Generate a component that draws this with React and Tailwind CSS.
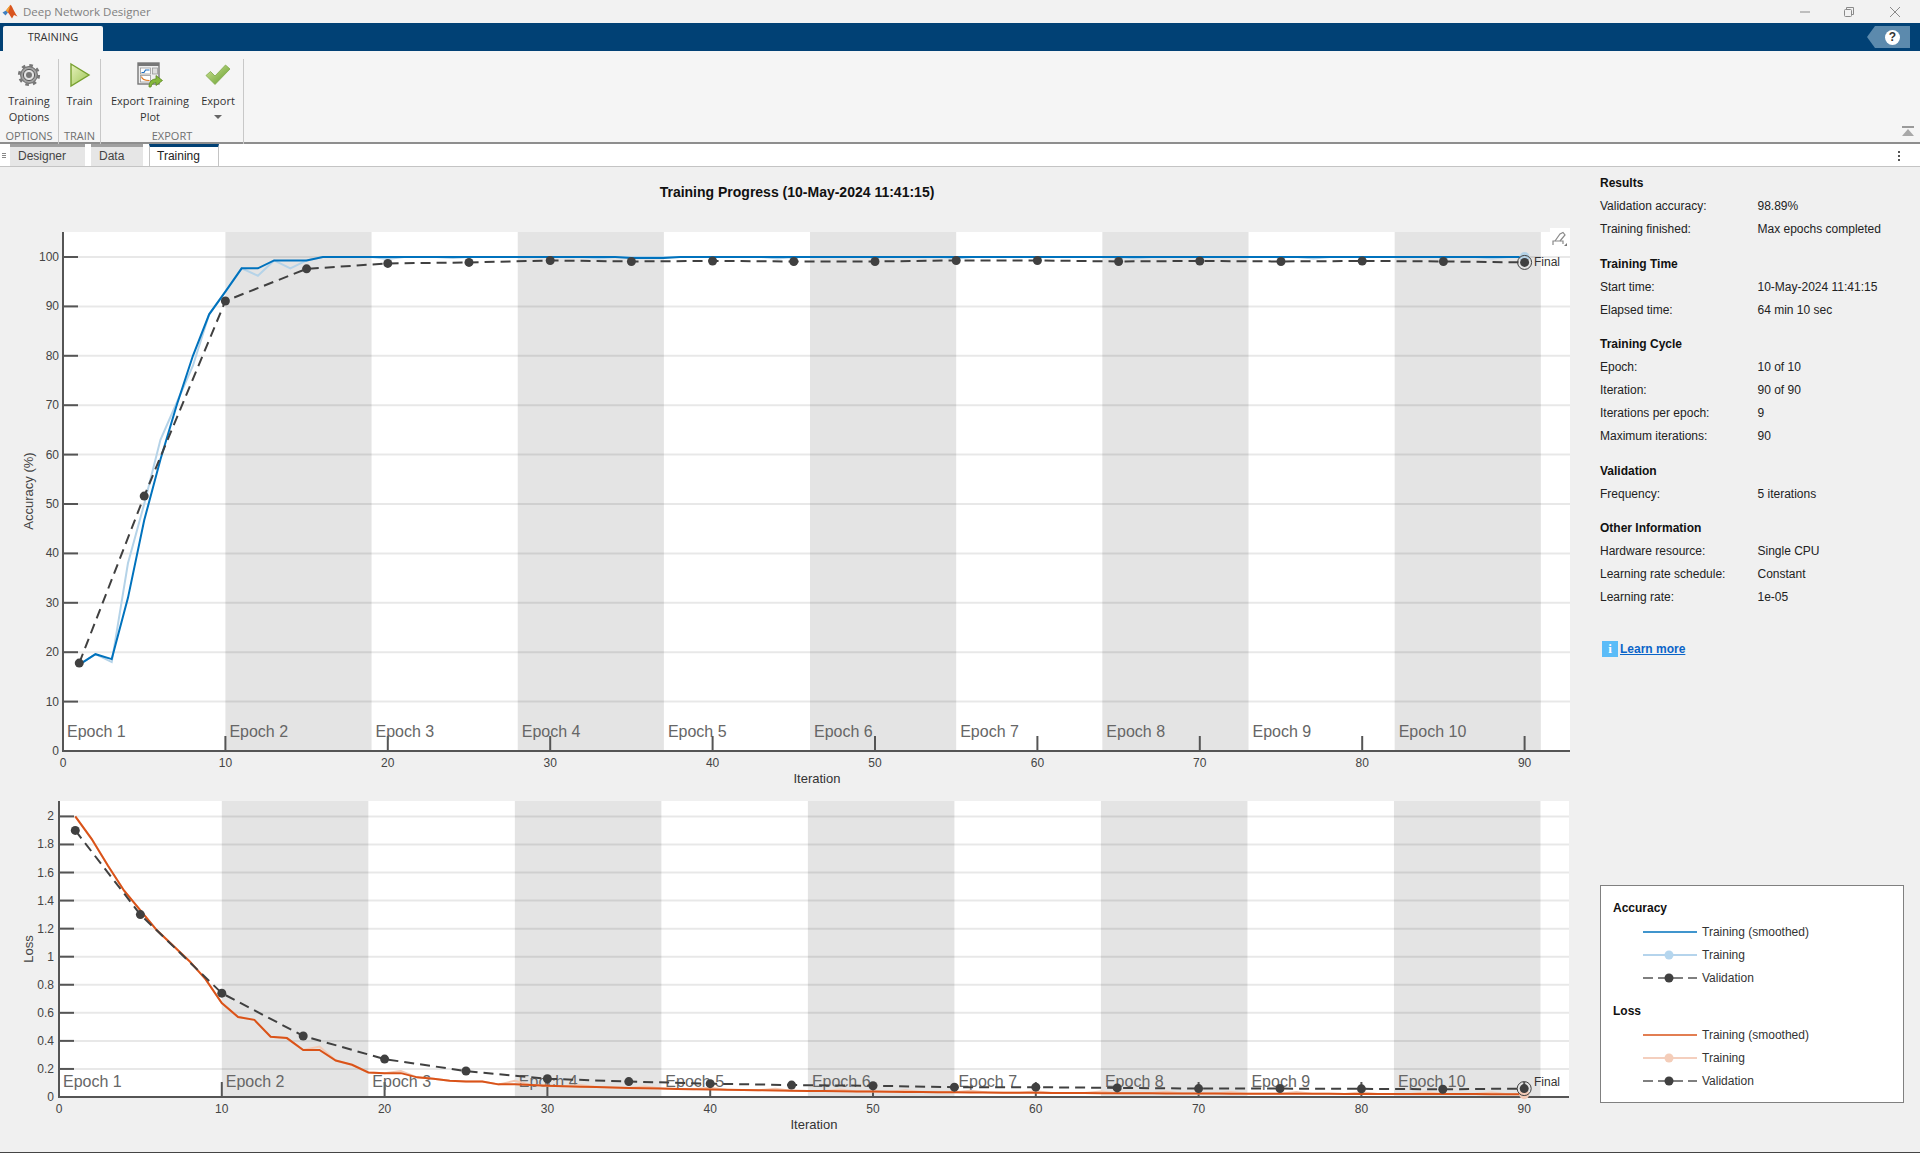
import React from "react";

const accSmooth = [17.5, 19.6, 18.6, 31, 46.7, 59, 70, 80, 88.4, 93, 97.7, 97.7, 99.3, 99.3, 99.3, 100];
const accRaw = [17.5, 19.6, 18, 38, 50, 63, 70.5, 78, 88.4, 93, 97.7, 96.2, 99.3, 97.7, 99.3, 100, 100, 100, 100, 99.6, 100, 100, 100, 99.8, 100];
const accVal = [[1, 17.8], [5, 51.6], [10, 91.1], [15, 97.6], [20, 98.7], [25, 98.9], [30, 99.3], [35, 99.1], [40, 99.2], [45, 99.1], [50, 99.1], [55, 99.3], [60, 99.3], [65, 99.1], [70, 99.2], [75, 99.1], [80, 99.2], [85, 99.1], [90, 98.9]];

const lossSmooth = [2, 1.84, 1.65, 1.47, 1.33, 1.19, 1.08, 0.97, 0.84, 0.67, 0.57, 0.55, 0.43, 0.42, 0.335, 0.335, 0.26, 0.23, 0.175, 0.17, 0.17, 0.14, 0.13, 0.115, 0.11, 0.11, 0.09, 0.09, 0.085, 0.08];
const lossRaw = [2, 1.84, 1.65, 1.47, 1.33, 1.19, 1.08, 0.97, 0.84, 0.67, 0.57, 0.55, 0.43, 0.42, 0.335, 0.36, 0.26, 0.23, 0.175, 0.17, 0.185, 0.14, 0.13, 0.115, 0.11, 0.11, 0.09, 0.115, 0.085, 0.08];
const lossVal = [[1, 1.9], [5, 1.3], [10, 0.74], [15, 0.435], [20, 0.27], [25, 0.185], [30, 0.13], [35, 0.11], [40, 0.095], [45, 0.085], [50, 0.08], [55, 0.07], [60, 0.07], [65, 0.065], [70, 0.06], [75, 0.06], [80, 0.058], [85, 0.055], [90, 0.06]];

// fill out the flat tail of each curve up to iteration 90
function extend(list, fn) {
  const out = [...list];
  for (let i = list.length + 1; i <= 90; i++) out.push(fn(i));
  return out;
}

const accSmoothAll = extend(accSmooth, (i) => (i > 34 && i < 38 ? 99.8 : 100));
const accRawAll = extend(accRaw, (i) => (i % 11 === 0 ? 99.7 : 100));
const lossSmoothAll = extend(lossSmooth, (i) => 0.018 + 0.062 * Math.exp(-(i - 30) / 18));
const lossRawAll = extend(lossRaw, (i) => 0.018 + 0.062 * Math.exp(-(i - 30) / 18) + (i % 4 === 0 ? 0.012 : 0));

const bands = [10, 28, 46, 64, 82];
const epochStarts = [0, 10, 19, 28, 37, 46, 55, 64, 73, 82];
const xTicks = [0, 10, 20, 30, 40, 50, 60, 70, 80, 90];

function Plot({ viewY, viewH, left, right, top, bottom, xScale, yScale, yTicks, yLabels, smooth, raw, val, color, rawColor, yTitle, yTitleY, xTitleX, xTitleY, epochY, labelEnd, finalY }) {
  const px = (i) => left + i * xScale;
  const py = (v) => bottom - v * yScale;
  const line = (arr) => arr.map((v, i) => `${px(i + 1)},${py(v)}`).join(" ");
  const valLine = val.map(([i, v]) => `${px(i)},${py(v)}`).join(" ");
  const last = val[val.length - 1];

  return (
    <svg viewBox={`0 ${viewY} 1594 ${viewH}`} className="block w-[1594px] shrink-0" style={{ height: viewH }}>
      <rect x={left} y={top} width={right - left} height={bottom - top} fill="#ffffff" />
      {bands.map((b) => (
        <rect key={b} x={px(b)} y={top} width={9 * xScale} height={bottom - top} fill="#e4e4e4" />
      ))}
      {yTicks.map((t) => (
        <line key={t} x1={left} x2={right} y1={py(t)} y2={py(t)} stroke="#000000" strokeOpacity="0.09" strokeWidth="2" />
      ))}
      {yTicks.map((t, i) => (
        <g key={t}>
          <line x1={left} x2={left + 15} y1={py(t)} y2={py(t)} stroke="#555555" strokeWidth="2" />
          <text x={labelEnd} y={py(t) + 4} textAnchor="end" className="text-[12px] fill-[#444444]">{yLabels[i]}</text>
        </g>
      ))}
      <text x={labelEnd} y={bottom + 4} textAnchor="end" className="text-[12px] fill-[#444444]">0</text>
      {xTicks.map((t) => (
        <g key={t}>
          {t > 0 && <line x1={px(t)} x2={px(t)} y1={bottom - 15} y2={bottom} stroke="#555555" strokeWidth="2" />}
          <text x={px(t)} y={bottom + 16} textAnchor="middle" className="text-[12px] fill-[#444444]">{t}</text>
        </g>
      ))}
      <line x1={left} x2={left} y1={top} y2={bottom + 1} stroke="#555555" strokeWidth="2" />
      <line x1={left} x2={right} y1={bottom} y2={bottom} stroke="#555555" strokeWidth="2" />
      {epochStarts.map((s, i) => (
        <text key={s} x={i === 0 ? left + 4 : px(s) + 4} y={epochY} className="text-[16px] fill-[#666666]">
          Epoch {i + 1}
        </text>
      ))}
      <polyline points={line(raw)} fill="none" stroke={rawColor} strokeWidth="2" />
      <polyline points={line(smooth)} fill="none" stroke={color} strokeWidth="2" />
      <circle cx={px(90)} cy={py(raw[89])} r="5" fill={rawColor} />
      <polyline points={valLine} fill="none" stroke="#404040" strokeWidth="2" strokeDasharray="10 6" />
      {val.map(([i, v]) => (
        <circle key={i} cx={px(i)} cy={py(v)} r="4.5" fill="#404040" />
      ))}
      <circle cx={px(last[0])} cy={py(last[1])} r="7" fill="none" stroke="#404040" strokeWidth="1" />
      <text x="1534" y={finalY} className="text-[12px] fill-[#333333]">Final</text>
      <text x="33" y={yTitleY} textAnchor="middle" transform={`rotate(-90 33 ${yTitleY})`} className="text-[13px] fill-[#444444]">{yTitle}</text>
      <text x={xTitleX} y={xTitleY} textAnchor="middle" className="text-[13px] fill-[#333333]">Iteration</text>
    </svg>
  );
}

function GearIcon() {
  return (
    <svg width="24" height="24" viewBox="0 0 24 24">
      <circle cx="12" cy="12" r="9.8" fill="none" stroke="#777777" strokeWidth="2.6" strokeDasharray="3.6 4.1" />
      <circle cx="12" cy="12" r="8.4" fill="#a2a2a2" stroke="#666666" strokeWidth="1" />
      <circle cx="12" cy="12" r="5.6" fill="#e2e2e2" stroke="#5a5a5a" strokeWidth="1" />
      <circle cx="12" cy="12" r="3" fill="#777777" />
    </svg>
  );
}

function PlayIcon() {
  return (
    <svg width="22" height="26" viewBox="0 0 22 26">
      <defs>
        <linearGradient id="playFill" x1="0" y1="0" x2="1" y2="1">
          <stop offset="0" stopColor="#e8f2bd" />
          <stop offset="1" stopColor="#9cc454" />
        </linearGradient>
      </defs>
      <path d="M2 2 L20 13 L2 24 Z" fill="url(#playFill)" stroke="#77a02f" strokeWidth="1.4" />
    </svg>
  );
}

function ExportPlotIcon() {
  return (
    <svg width="26" height="26" viewBox="0 0 26 26">
      <rect x="1" y="1" width="21" height="21" fill="#eeeeee" stroke="#777777" strokeWidth="1.4" />
      <rect x="1" y="1" width="21" height="3" fill="#777777" />
      <rect x="3.5" y="6" width="10" height="6" fill="#ffffff" stroke="#9a9a9a" strokeWidth="0.8" />
      <path d="M4.5 10.5 L7 10.5 L8.5 8 L12.5 8" fill="none" stroke="#1f6fc0" strokeWidth="1.2" />
      <rect x="3.5" y="13.5" width="10" height="6.5" fill="#ffffff" stroke="#9a9a9a" strokeWidth="0.8" />
      <path d="M4.5 14.5 C5 18 8 18.5 12.5 18.5" fill="none" stroke="#e0741c" strokeWidth="1.2" />
      <rect x="15.5" y="6" width="5" height="6" fill="#dddddd" stroke="#9a9a9a" strokeWidth="0.8" />
      <path d="M12 25 C12 19.5 15 17 19 17 L19 13.5 L25.5 18.5 L19 23.5 L19 20.5 C16.5 20.5 14.5 22 14 25 Z" fill="#86b83c" stroke="#5d8a22" strokeWidth="0.8" />
    </svg>
  );
}

function CheckIcon() {
  return (
    <svg width="26" height="22" viewBox="0 0 26 22">
      <defs>
        <linearGradient id="checkFill" x1="0" y1="0" x2="1" y2="1">
          <stop offset="0" stopColor="#d2e69a" />
          <stop offset="1" stopColor="#5f9a26" />
        </linearGradient>
      </defs>
      <path d="M1 11.5 L5.5 7.5 L10 12 L20.5 1 L25 5 L10 20.5 Z" fill="url(#checkFill)" stroke="#7fa84a" strokeWidth="0.8" />
    </svg>
  );
}

function MatlabLogo() {
  return (
    <svg width="16" height="15" viewBox="0 0 16 15">
      <path d="M0.5 8.5 L4 6.5 L6 8.5 L3.5 11.5 Z" fill="#3f7fc0" />
      <path d="M4 6.5 L8.5 0.8 C10 1.5 12 8 15.5 12.5 L12 11 L10 14.5 C8 11.5 7 9.5 6 8.5 Z" fill="#d9541e" />
      <path d="M8.5 0.8 C7.5 3.5 7 6 6 8.5 L4 6.5 Z" fill="#f0a53a" />
    </svg>
  );
}

function ToolButton({ width, icon, lines, caret }) {
  return (
    <div className="flex flex-col items-center" style={{ width }}>
      <div className="h-[31px] flex items-center justify-center">{icon}</div>
      <div className="mt-[3px] text-[11px] leading-[16px] text-[#333333] text-center font-['Open_Sans',sans-serif]">
        {lines.map((l) => (
          <div key={l}>{l}</div>
        ))}
        {caret && (
          <div className="h-[16px] flex items-center justify-center">
            <div className="w-0 h-0 border-x-[4px] border-x-transparent border-t-[4px] border-t-[#666666]" />
          </div>
        )}
      </div>
    </div>
  );
}

function ToolSection({ width, label, children }) {
  return (
    <div className="flex flex-col h-[85px] border-r border-[#c8c8c8]" style={{ width }}>
      <div className="flex flex-1 justify-center">{children}</div>
      <div className="h-[16px] text-center text-[11px] leading-[16px] text-[#707070] font-['Open_Sans',sans-serif]">{label}</div>
    </div>
  );
}

function InfoSection({ title, rows }) {
  return (
    <div className="mb-[11.5px]">
      <div className="h-[23px] leading-[23px] font-bold text-[#111111]">{title}</div>
      {rows.map(([k, v]) => (
        <div key={k} className="h-[23px] leading-[23px] flex text-[#222222]">
          <span className="w-[157.5px] shrink-0">{k}</span>
          <span>{v}</span>
        </div>
      ))}
    </div>
  );
}

function LegendRow({ color, dot, dashed, label }) {
  return (
    <div className="h-[23.3px] flex items-center pl-[42px] text-[#333333]">
      <svg width="54" height="12" viewBox="0 0 54 12" className="shrink-0">
        <line x1="0" x2="54" y1="6" y2="6" stroke={color} strokeWidth="1.5" strokeDasharray={dashed ? "10 5" : undefined} />
        {dot && <circle cx="26" cy="6" r="4.5" fill={dot} />}
      </svg>
      <span className="ml-[5px]">{label}</span>
    </div>
  );
}

export default function App() {
  return (
    <div className="w-[1920px] h-[1153px] flex flex-col overflow-hidden bg-[#f0f0f0] text-[12px] font-['Liberation_Sans',Arial,sans-serif]">
      {/* title bar */}
      <div className="h-[23px] shrink-0 bg-[#f2f2f2] flex items-center pl-[2px]">
        <MatlabLogo />
        <span className="ml-[5px] text-[11.5px] text-[#808080] font-['Open_Sans',sans-serif]">Deep Network Designer</span>
        <div className="ml-auto flex items-center">
          <svg width="12" height="12" viewBox="0 0 12 12" className="mr-[32px]"><line x1="1" x2="11" y1="6" y2="6" stroke="#8a8a8a" /></svg>
          <svg width="12" height="12" viewBox="0 0 12 12" className="mr-[34px]">
            <rect x="1.5" y="3.5" width="7" height="7" rx="1" fill="none" stroke="#8a8a8a" />
            <path d="M3.5 3.5 V1.5 H10.5 V8.5 H8.5" fill="none" stroke="#8a8a8a" />
          </svg>
          <svg width="12" height="12" viewBox="0 0 12 12" className="mr-[19px]"><path d="M1 1 L11 11 M11 1 L1 11" stroke="#8a8a8a" /></svg>
        </div>
      </div>

      {/* ribbon tabs */}
      <div className="h-[28px] shrink-0 bg-[#014175] flex items-end pl-[3px] relative">
        <div className="w-[100px] h-[25px] bg-[#f5f5f5] rounded-t-[2px] text-center leading-[22px] text-[11px] text-[#333333] font-['Open_Sans',sans-serif]">TRAINING</div>
        <div className="absolute right-[10px] top-[3px] w-[43px] h-[22px]">
          <svg width="43" height="22" viewBox="0 0 43 22" className="absolute inset-0">
            <path d="M8 0 H43 V22 H8 L0 11 Z" fill="#5c8aad" />
          </svg>
          <div className="absolute left-[18px] top-[4px] w-[15px] h-[15px] rounded-full bg-white text-center text-[12px] leading-[15px] font-bold text-[#333333]">?</div>
        </div>
      </div>

      {/* toolstrip */}
      <div className="h-[93px] shrink-0 bg-[#f5f5f5] border-b-2 border-[#8e8e8e] flex items-start pt-[8px] relative">
        <ToolSection width={59} label="OPTIONS">
          <ToolButton width={58} icon={<GearIcon />} lines={["Training", "Options"]} />
        </ToolSection>
        <ToolSection width={42} label="TRAIN">
          <ToolButton width={41} icon={<PlayIcon />} lines={["Train"]} />
        </ToolSection>
        <ToolSection width={143} label="EXPORT">
          <ToolButton width={92} icon={<ExportPlotIcon />} lines={["Export Training", "Plot"]} />
          <ToolButton width={44} icon={<CheckIcon />} lines={["Export"]} caret />
        </ToolSection>
        <svg width="12" height="11" viewBox="0 0 12 11" className="absolute right-[6px] bottom-[5px]">
          <rect x="0" y="0" width="12" height="2" fill="#9a9a9a" />
          <path d="M6 3 L12 10 H0 Z" fill="#a8a8a8" />
        </svg>
      </div>

      {/* document tabs */}
      <div className="h-[23px] shrink-0 bg-white border-b border-[#c4c4c4] flex items-stretch relative">
        <div className="w-[10px] flex flex-col items-center justify-center gap-[1px] pr-[3px]">
          <div className="w-[4px] h-[1px] bg-[#888888]" />
          <div className="w-[4px] h-[1px] bg-[#888888]" />
          <div className="w-[4px] h-[1px] bg-[#888888]" />
        </div>
        <div className="w-[75px] bg-[#e6e6e6] border-t-[3px] border-[#a0a0a0] pl-[8px] leading-[19px] text-[#444444]">Designer</div>
        <div className="w-[52px] ml-[6px] bg-[#e6e6e6] border-t-[3px] border-[#a0a0a0] pl-[8px] leading-[19px] text-[#444444]">Data</div>
        <div className="w-[70px] ml-[6px] bg-white border-t-[3px] border-x border-x-[#c4c4c4] border-t-[#014175] pl-[7px] leading-[19px] text-[#222222]">Training</div>
        <div className="absolute right-[20px] top-[7px] flex flex-col gap-[2px]">
          <div className="w-[2px] h-[2px] bg-[#555555]" />
          <div className="w-[2px] h-[2px] bg-[#555555]" />
          <div className="w-[2px] h-[2px] bg-[#555555]" />
        </div>
      </div>

      {/* content */}
      <div className="flex-1 flex border-b border-[#444444] min-h-0">
        <div className="w-[1594px] shrink-0 flex flex-col relative">
          <div className="h-[48px] shrink-0 pt-[17px] text-center text-[14px] leading-[16px] font-bold text-[#111111]">
            Training Progress (10-May-2024 11:41:15)
          </div>
          <Plot
            viewY={215}
            viewH={570}
            left={63}
            right={1570}
            top={232}
            bottom={751}
            xScale={16.24}
            yScale={4.94}
            yTicks={[10, 20, 30, 40, 50, 60, 70, 80, 90, 100]}
            yLabels={["10", "20", "30", "40", "50", "60", "70", "80", "90", "100"]}
            smooth={accSmoothAll}
            raw={accRawAll}
            val={accVal}
            color="#0072bd"
            rawColor="#b5d3e8"
            yTitle="Accuracy (%)"
            yTitleY={491}
            xTitleX={817}
            xTitleY={783}
            epochY={737}
            labelEnd={59}
            finalY={266}
          />
          <Plot
            viewY={785}
            viewH={367}
            left={59}
            right={1569}
            top={801}
            bottom={1097}
            xScale={16.28}
            yScale={140.3}
            yTicks={[0.2, 0.4, 0.6, 0.8, 1, 1.2, 1.4, 1.6, 1.8, 2]}
            yLabels={["0.2", "0.4", "0.6", "0.8", "1", "1.2", "1.4", "1.6", "1.8", "2"]}
            smooth={lossSmoothAll}
            raw={lossRawAll}
            val={lossVal}
            color="#d95319"
            rawColor="#f2c9b5"
            yTitle="Loss"
            yTitleY={949}
            xTitleX={814}
            xTitleY={1129}
            epochY={1087}
            labelEnd={54}
            finalY={1086}
          />
          {/* export toolbar over the accuracy plot */}
          <div className="absolute left-[1550px] top-[61px] w-[20px] h-[22px] bg-white flex items-center justify-center">
            <svg width="16" height="16" viewBox="0 0 16 16">
              <path d="M1 14 V10 H11 V13" fill="none" stroke="#8a8a8a" strokeWidth="1.2" />
              <path d="M3 10 L8 3 L11 1.5 L13 4 L8 10" fill="none" stroke="#8a8a8a" strokeWidth="1.2" />
              <path d="M12 15 L15 15 L15 12 Z" fill="#777777" />
            </svg>
          </div>
        </div>

        <div className="flex-1 flex flex-col pl-[6px] pt-[5px] pr-[16px] pb-[49px]">
          <InfoSection title="Results" rows={[["Validation accuracy:", "98.89%"], ["Training finished:", "Max epochs completed"]]} />
          <InfoSection title="Training Time" rows={[["Start time:", "10-May-2024 11:41:15"], ["Elapsed time:", "64 min 10 sec"]]} />
          <InfoSection title="Training Cycle" rows={[["Epoch:", "10 of 10"], ["Iteration:", "90 of 90"], ["Iterations per epoch:", "9"], ["Maximum iterations:", "90"]]} />
          <InfoSection title="Validation" rows={[["Frequency:", "5 iterations"]]} />
          <InfoSection title="Other Information" rows={[["Hardware resource:", "Single CPU"], ["Learning rate schedule:", "Constant"], ["Learning rate:", "1e-05"]]} />
          <div className="mt-[17px] h-[23px] flex items-center pl-[2px]">
            <div className="w-[16px] h-[16px] bg-[#5bbcf8] text-white text-center font-bold text-[13px] leading-[16px] font-['Liberation_Serif',serif]">i</div>
            <a className="ml-[2px] font-bold text-[#0a64c8] underline">Learn more</a>
          </div>

          <div className="mt-auto w-[304px] h-[218px] shrink-0 bg-white border border-[#808080] pt-[10px] pl-[12px]">
            <div className="h-[24px] leading-[24px] font-bold text-[#111111]">Accuracy</div>
            <div className="-ml-[12px]">
              <LegendRow color="#0072bd" label="Training (smoothed)" />
              <LegendRow color="#9cc6e6" dot="#b5d6ee" label="Training" />
              <LegendRow color="#555555" dot="#404040" dashed label="Validation" />
            </div>
            <div className="h-[24px] mt-[9px] leading-[24px] font-bold text-[#111111]">Loss</div>
            <div className="-ml-[12px]">
              <LegendRow color="#d95319" label="Training (smoothed)" />
              <LegendRow color="#f0bfa8" dot="#f4cdb9" label="Training" />
              <LegendRow color="#555555" dot="#404040" dashed label="Validation" />
            </div>
          </div>
        </div>
      </div>
    </div>
  );
}
